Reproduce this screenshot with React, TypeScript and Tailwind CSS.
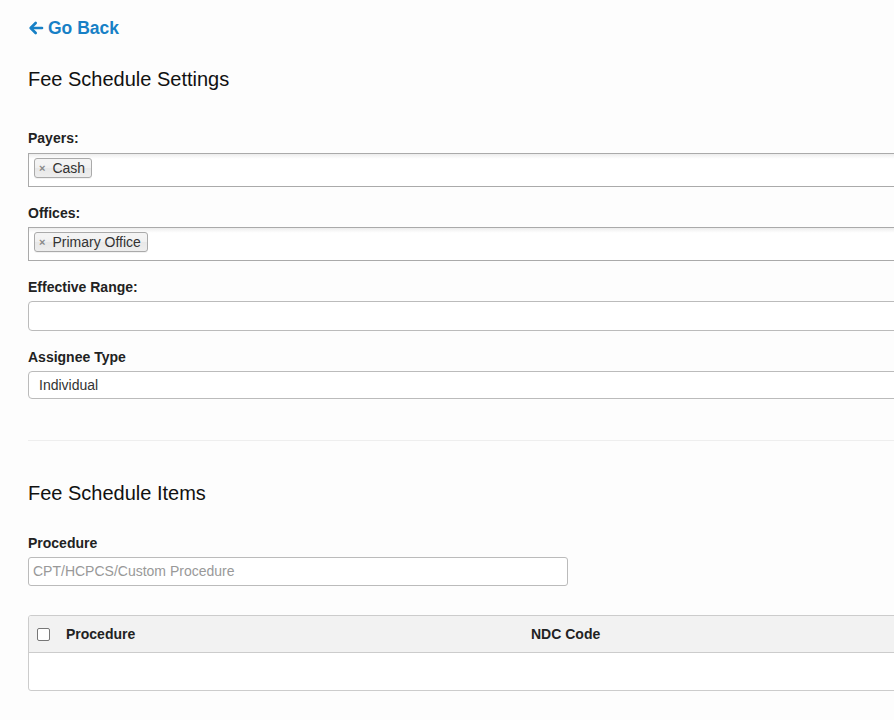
import React from "react";

function Chip({ label }: { label: string }) {
  return (
    <div className="flex items-center h-[20px] mt-[4px] ml-[5px] pl-[4px] pr-[6px] border border-[#aaa] rounded-[3px] bg-[linear-gradient(#f4f4f4_20%,#f0f0f0_50%,#e8e8e8_52%,#eeeeee_100%)] shadow-[0_1px_0_rgba(0,0,0,0.05)]">
      <span className="text-[11px] font-bold text-[#888] leading-none mr-[7px] mt-[1px]">×</span>
      <span className="text-[14px] text-[#333] leading-none">{label}</span>
    </div>
  );
}

function Label({ children, className = "" }: { children: React.ReactNode; className?: string }) {
  return (
    <div className={"h-[16px] flex items-center text-[14px] font-bold text-[#222] " + className}>
      {children}
    </div>
  );
}

export default function App() {
  return (
    <div className="min-h-screen w-full overflow-hidden bg-[#fdfdfd] font-['Liberation_Sans',Arial,sans-serif] text-[#222]">
      <div className="pl-[28px] w-[1000px]">
        <div className="mt-[18px] h-[20px] flex items-center text-[#1780c6]">
          <svg width="16" height="16" viewBox="0 0 24 24" fill="none" stroke="currentColor" strokeWidth="4" strokeLinecap="round" strokeLinejoin="round" className="mr-[4px]">
            <path d="M21 12H5" />
            <path d="M11.5 4.5L4 12l7.5 7.5" />
          </svg>
          <span className="text-[17.5px] font-bold">Go Back</span>
        </div>

        <div className="mt-[29px] h-[24px] flex items-center text-[20px] text-[#111]">Fee Schedule Settings</div>

        <Label className="mt-[39px]">Payers:</Label>
        <div className="mt-[7px] h-[34px] border border-[#aaa] bg-[linear-gradient(#eeeeee_1%,#ffffff_15%)] flex items-start">
          <Chip label="Cash" />
        </div>

        <Label className="mt-[18px]">Offices:</Label>
        <div className="mt-[6px] h-[34px] border border-[#aaa] bg-[linear-gradient(#eeeeee_1%,#ffffff_15%)] flex items-start">
          <Chip label="Primary Office" />
        </div>

        <Label className="mt-[18px]">Effective Range:</Label>
        <div className="mt-[6px] h-[30px] border border-[#bbb] rounded-[4px] bg-white"></div>

        <Label className="mt-[18px]">Assignee Type</Label>
        <div className="mt-[6px] h-[28px] border border-[#bbb] rounded-[4px] bg-white flex items-center pl-[10px] text-[14px] text-[#333]">
          Individual
        </div>

        <div className="mt-[41px] border-t border-[#eee]"></div>

        <div className="mt-[40px] h-[24px] flex items-center text-[20px] text-[#111]">Fee Schedule Items</div>

        <Label className="mt-[30px]">Procedure</Label>
        <div className="mt-[6px] h-[29px] w-[540px] border border-[#bbb] rounded-[3px] bg-white flex items-center pl-[4px] text-[14px] text-[#999]">
          CPT/HCPCS/Custom Procedure
        </div>

        <div className="mt-[29px] border border-[#ccc] rounded-[3px] bg-white overflow-hidden">
          <div className="h-[37px] bg-[#f2f2f2] border-b border-[#ccc] flex items-center text-[14px] font-bold text-[#222] pt-[1px]">
            <div className="w-[13px] h-[13px] ml-[8px] border border-[#777] rounded-[2px] bg-white"></div>
            <div className="ml-[16px] w-[465px]">Procedure</div>
            <div>NDC Code</div>
          </div>
          <div className="h-[37px]"></div>
        </div>
      </div>
    </div>
  );
}
